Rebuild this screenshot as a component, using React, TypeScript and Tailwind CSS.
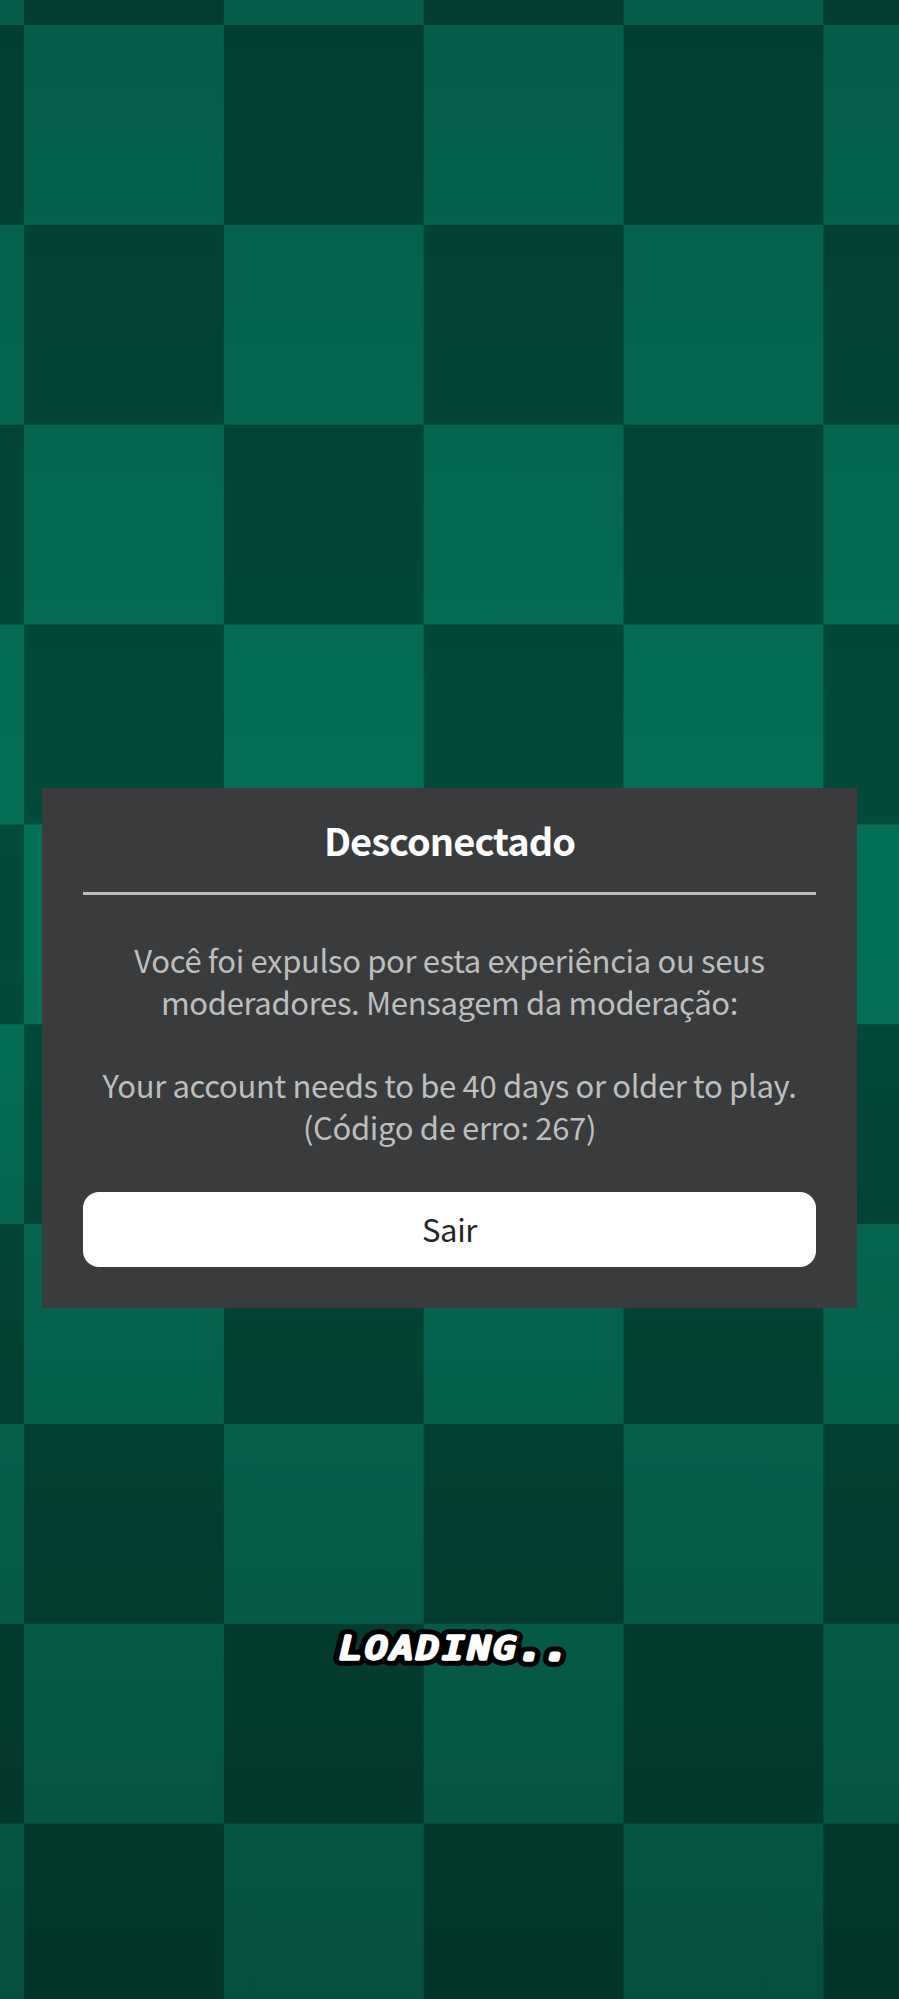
const message = [
  'Você foi expulso por esta experiência ou seus',
  'moderadores. Mensagem da moderação:',
  '',
  'Your account needs to be 40 days or older to play.',
  '(Código de erro: 267)',
]

function DisconnectDialog() {
  return (
    <div className="ml-[42px] flex h-[520px] w-[815px] flex-col bg-[#3a3b3d] px-[41px] font-['Noto_Sans_CJK_SC',sans-serif]">
      <h1 className="h-[104px] pt-[24px] text-center text-[38px] leading-[56px] font-bold tracking-[-0.95px] text-white">
        Desconectado
      </h1>
      <div className="h-[3px] shrink-0 bg-[#bdbebe]" />
      <div className="mt-[44px] text-center text-[31px] leading-[41.7px] tracking-[-0.34px] whitespace-nowrap text-[#bdbebe]">
        {message.map((line, i) => (
          <p key={i} className="h-[41.7px]">
            {line}
          </p>
        ))}
      </div>
      <button
        type="button"
        className="mt-auto mb-[41px] h-[75px] w-full shrink-0 rounded-[16px] bg-white text-[31px] tracking-[-0.33px] text-[#232527]"
      >
        Sair
      </button>
    </div>
  )
}

// White lettering with a thick rounded outline
function LoadingLabel() {
  return (
    <svg
      width="260"
      height="60"
      viewBox="0 0 260 60"
      strokeLinejoin="round"
      className="mt-[308px] ml-[320px] font-['DejaVu_Sans_Mono',monospace] text-[32.5px] tracking-[2.8px] italic"
    >
      <g transform="translate(19.5 42.5) scale(1.15 1)">
        <text fill="#000" stroke="#000" strokeWidth="13.5">
          LOADING<tspan strokeWidth="15.5">..</tspan>
        </text>
        <text fill="#fff" stroke="#fff" strokeWidth="3.3" aria-hidden="true">
          LOADING<tspan strokeWidth="5.5">..</tspan>
        </text>
      </g>
    </svg>
  )
}

export default function App() {
  return (
    <div className="h-[1999px] w-[899px] overflow-hidden bg-[linear-gradient(#055c4a_0px,#037058_860px,#037058_960px,#05644f_1250px,#044f3f_1999px)]">
      <div className="h-full bg-[conic-gradient(#0005_25%,transparent_0_50%,#0005_0_75%,transparent_0)] bg-[length:399.7px_399.7px] bg-[position:24px_25px] pt-[788px]">
        <DisconnectDialog />
        <LoadingLabel />
      </div>
    </div>
  )
}
